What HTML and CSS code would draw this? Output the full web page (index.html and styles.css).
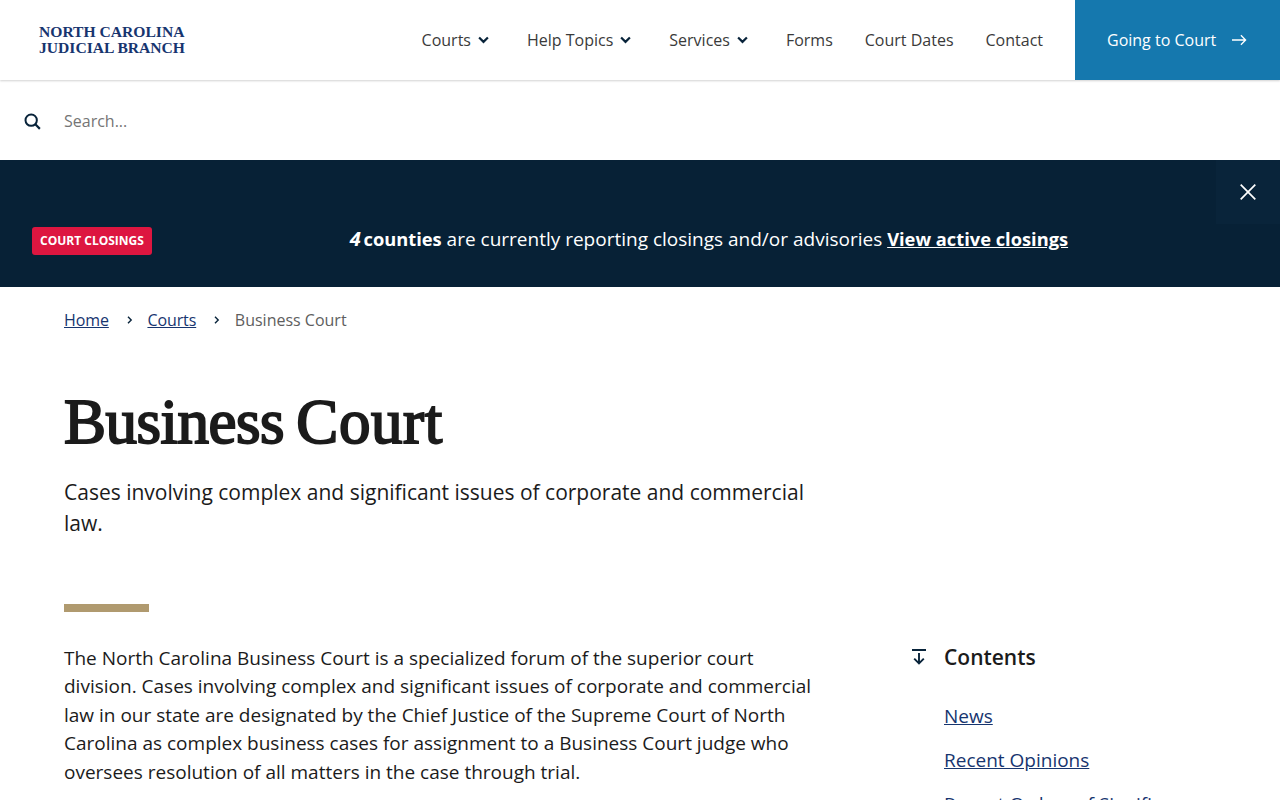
FILE: index.html
```html
<!DOCTYPE html>
<html lang="en">
<head>
<meta charset="utf-8">
<title>Business Court | North Carolina Judicial Branch</title>
<link rel="stylesheet" href="styles.css">
</head>
<body>
<header class="site-header">
  <a class="logo" href="#"><span>North Carolina</span><span>Judicial Branch</span></a>
  <nav class="main-nav">
    <a href="#">Courts <svg class="chev" viewBox="0 0 12 8" width="11" height="8"><path d="M1.2 1.2 6 6l4.800-4.800" fill="none" stroke="#08233a" stroke-width="2.400"/></svg></a>
    <a href="#">Help Topics <svg class="chev" viewBox="0 0 12 8" width="11" height="8"><path d="M1.2 1.2 6 6l4.800-4.800" fill="none" stroke="#08233a" stroke-width="2.400"/></svg></a>
    <a href="#">Services <svg class="chev" viewBox="0 0 12 8" width="11" height="8"><path d="M1.2 1.2 6 6l4.800-4.800" fill="none" stroke="#08233a" stroke-width="2.400"/></svg></a>
    <a href="#">Forms</a>
    <a href="#">Court Dates</a>
    <a href="#">Contact</a>
  </nav>
  <a class="cta" href="#">Going to Court <svg viewBox="0 0 16 12" width="15" height="12"><path d="M0 6h14.500M9.500 1l5 5-5 5" fill="none" stroke="#fff" stroke-width="1.400"/></svg></a>
</header>
<div class="search-row">
  <svg viewBox="0 0 18 18" width="17" height="17"><circle cx="7.600" cy="7.600" r="6" fill="none" stroke="#08233a" stroke-width="2.100"/><path d="m12 12 4.800 4.800" stroke="#08233a" stroke-width="2.300"/></svg>
  <span class="search-placeholder">Search...</span>
</div>
<section class="alert">
  <span class="badge">Court Closings</span>
  <p class="alert-text"><b><i>4</i> counties</b> are currently reporting closings and/or advisories <a href="#">View active closings</a></p>
  <button class="close" aria-label="Close"><svg viewBox="0 0 16 16" width="16" height="16"><path d="M.7.7l14.600 14.600M15.300.7.700 15.300" stroke="#fff" stroke-width="1.700" fill="none"/></svg></button>
</section>
<nav class="crumbs">
  <a href="#">Home</a>
  <svg viewBox="0 0 6 8" width="6" height="8"><path d="M1 .8 4.200 4 1 7.200" fill="none" stroke="#08233a" stroke-width="1.400"/></svg>
  <a href="#">Courts</a>
  <svg viewBox="0 0 6 8" width="6" height="8"><path d="M1 .8 4.200 4 1 7.200" fill="none" stroke="#08233a" stroke-width="1.400"/></svg>
  <span>Business Court</span>
</nav>
<main class="page">
  <h1>Business <span>Court</span></h1>
  <p class="lead">Cases involving complex and significant issues of corporate and commercial law.</p>
  <div class="rule"></div>
  <div class="columns">
    <div class="body-text">
      <p>The North Carolina Business Court is a specialized forum of the superior court division. Cases involving complex and significant issues of corporate and commercial law in our state are designated by the Chief Justice of the Supreme Court of North Carolina as complex business cases for assignment to a Business Court judge who oversees resolution of all matters in the case through trial.</p>
    </div>
    <aside class="toc">
      <h2><svg viewBox="0 0 14 16" width="14" height="16"><path d="M0 1h14M7 4v10.500M2.200 9.700 7 14.500l4.800-4.800" fill="none" stroke="#08233a" stroke-width="1.900"/></svg>Contents</h2>
      <ul>
        <li><a href="#">News</a></li>
        <li><a href="#">Recent Opinions</a></li>
        <li><a href="#">Recent Orders of Significance</a></li>
      </ul>
    </aside>
  </div>
</main>
</body>
</html>
```
FILE: styles.css
```css
html, body { margin: 0; padding: 0; height: 800px; overflow: hidden; }
body { font-family: "Open Sans", "Liberation Sans", sans-serif; color: #1b1b1b; background: #fff; }
a { color: inherit; }

.site-header { display: flex; align-items: center; height: 80px; box-shadow: 0 1px 2px rgba(0,0,0,.18); position: relative; }
.logo { display: flex; flex-direction: column; margin-left: 39px; font-family: "Liberation Serif", serif; font-weight: 700; font-size: 15.6px; line-height: 16px; text-transform: uppercase; color: #17356f; text-decoration: none; }
.main-nav { display: flex; align-items: center; gap: 32px; margin-left: auto; margin-right: 32px; font-size: 16px; color: #3a3a3a; }
.main-nav a { display: flex; align-items: center; gap: 7px; text-decoration: none; white-space: nowrap; }
.main-nav a:nth-child(-n+3) { margin-right: 6px; }
.cta { display: flex; align-items: center; gap: 16px; width: 205px; height: 80px; padding-left: 32px; box-sizing: border-box; background: #1578ae; color: #fff; font-size: 16px; text-decoration: none; }

.search-row { display: flex; align-items: center; gap: 23px; height: 80px; padding: 2px 0 0 24px; box-sizing: border-box; }
.search-placeholder { font-size: 16px; color: #757575; }

.alert { display: flex; align-items: center; position: relative; height: 127px; padding: 0 32px; box-sizing: border-box; background: #072136; color: #fff; }
.badge { display: block; padding: 0 8px; height: 28px; line-height: 28px; border-radius: 3px; background: #dd1640; font-size: 12px; font-weight: 700; text-transform: uppercase; white-space: nowrap; margin-top: 34px; }
.alert-text { margin: 30px 0 0; flex: 1; text-align: center; font-size: 19px; line-height: 28px; padding-left: 18px; }
.alert-text b { font-size: 18.3px; }
.alert-text i { font-weight: 700; margin-right: -2px; font-size: 20px; }
.alert-text a { font-weight: 700; font-size: 18.3px; }
.close { position: absolute; top: 0; right: 0; width: 64px; height: 64px; padding: 0; display: flex; align-items: center; justify-content: center; background: #09243a; border: 0; }

.crumbs { display: flex; align-items: center; height: 66px; padding-left: 64px; font-size: 16px; color: #5e5e5e; }
.crumbs a { color: #17356f; letter-spacing: -.1px; }
.crumbs svg { margin: 0 14.6px 0 18px; }

.page { padding: 0 64px; }
h1 { margin: 33px 0 0; font-family: "Liberation Serif", serif; font-size: 63px; line-height: 72px; font-weight: 400; -webkit-text-stroke: 2px #1b1b1b; color: #1b1b1b; letter-spacing: -.5px; word-spacing: -3px; }
h1 span { letter-spacing: .6px; }
.lead { margin: 19px 0 0; width: 760px; font-size: 21px; line-height: 31px; }
.rule { width: 85px; height: 8px; margin-top: 65px; background: #b09a6f; }
.columns { display: flex; margin-top: 32px; }
.body-text { width: 760px; font-size: 19px; line-height: 28.5px; }
.body-text p { margin: -.25px 0 0; }
.toc { margin: -1px 0 0 88px; }
.toc h2 { display: flex; align-items: center; gap: 18px; margin: 0; font-size: 21px; line-height: 28px; font-weight: 600; }
.toc ul { list-style: none; margin: 31px 0 0 32px; padding: 0; font-size: 19px; line-height: 28px; white-space: nowrap; }
.toc li { margin-bottom: 16px; }
.toc a { color: #17356f; }
```
